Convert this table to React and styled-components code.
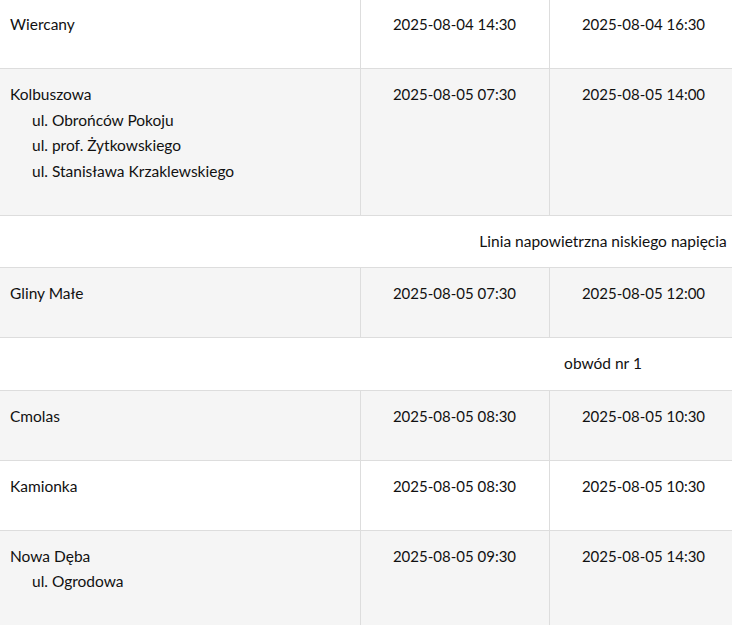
import styled, { createGlobalStyle } from 'styled-components';

const GlobalStyle = createGlobalStyle`
  html, body {
    margin: 0;
    padding: 0;
    overflow: hidden;
    background: #fff;
  }
  body {
    font-family: Lato, "Open Sans", "Liberation Sans", sans-serif;
    color: #111;
  }
`;

const Wrap = styled.div`
  margin-top: -1px;
  width: 1202px;
`;

const Table = styled.table`
  width: 100%;
  border-collapse: collapse;
  table-layout: fixed;
  font-size: 15.5px;
  line-height: 25.5px;
`;

const Row = styled.tr`
  border-bottom: 1px solid #ddd;
  &:nth-child(even) {
    background: #f5f5f5;
  }
`;

const PlaceCell = styled.td`
  width: 360px;
  box-sizing: border-box;
  vertical-align: top;
  padding: 13px 10px 30.5px 10px;
  border-right: 1px solid #ddd;
`;

const DateCell = styled.td`
  width: 189px;
  box-sizing: border-box;
  vertical-align: top;
  text-align: center;
  font-size: 15px;
  padding: 13px 0 30.5px;
  border-right: 1px solid #ddd;
`;

const RestCell = styled.td`
  vertical-align: top;
`;

const HeaderCell = styled.td`
  text-align: center;
  padding: 13px 0 13px 4px;
`;

const Streets = styled.ul`
  list-style: none;
  margin: 0;
  padding: 0 0 0 22px;
`;

const rows = [
  { place: 'Wiercany', from: '2025-08-04 14:30', to: '2025-08-04 16:30' },
  {
    place: 'Kolbuszowa',
    streets: ['ul. Obrońców Pokoju', 'ul. prof. Żytkowskiego', 'ul. Stanisława Krzaklewskiego'],
    from: '2025-08-05 07:30',
    to: '2025-08-05 14:00',
  },
  { header: 'Linia napowietrzna niskiego napięcia' },
  { place: 'Gliny Małe', from: '2025-08-05 07:30', to: '2025-08-05 12:00' },
  { header: 'obwód nr 1' },
  { place: 'Cmolas', from: '2025-08-05 08:30', to: '2025-08-05 10:30' },
  { place: 'Kamionka', from: '2025-08-05 08:30', to: '2025-08-05 10:30' },
  {
    place: 'Nowa Dęba',
    streets: ['ul. Ogrodowa'],
    from: '2025-08-05 09:30',
    to: '2025-08-05 14:30',
  },
];

export default function App() {
  return (
    <Wrap>
      <GlobalStyle />
      <Table>
        <tbody>
          {rows.map((r, i) =>
            r.header ? (
              <Row key={i}>
                <HeaderCell colSpan={4}>{r.header}</HeaderCell>
              </Row>
            ) : (
              <Row key={i}>
                <PlaceCell>
                  {r.place}
                  {r.streets && (
                    <Streets>
                      {r.streets.map(s => (
                        <li key={s}>{s}</li>
                      ))}
                    </Streets>
                  )}
                </PlaceCell>
                <DateCell>{r.from}</DateCell>
                <DateCell>{r.to}</DateCell>
                <RestCell />
              </Row>
            )
          )}
        </tbody>
      </Table>
    </Wrap>
  );
}
